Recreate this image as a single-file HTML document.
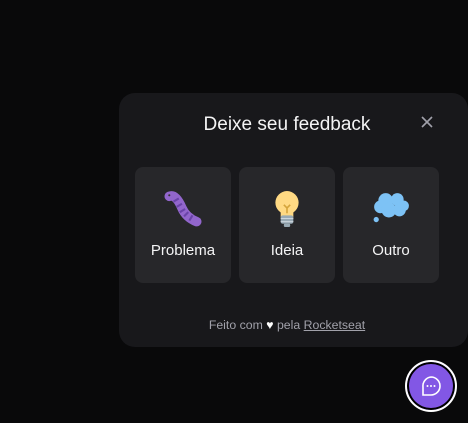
<!DOCTYPE html>
<html><head><meta charset="utf-8"><style>
*{margin:0;padding:0;box-sizing:border-box}
body{width:468px;height:423px;background:#09090a;position:relative;overflow:hidden;font-family:"Liberation Sans",sans-serif;color:#f4f4f5}
.panel{position:absolute;left:119px;top:93px;width:349px;height:254px;background:#18181b;border-radius:16px}
.title{position:absolute;left:0;width:336px;top:21px;text-align:center;font-size:19px;color:#f4f4f5}
.close{position:absolute;left:300px;top:21px}
.card{position:absolute;top:74px;width:96px;height:116px;background:#27272a;border-radius:8px;text-align:center}
.card span{position:absolute;left:0;right:0;top:75px;font-size:15px}
.card svg{position:absolute;left:29px;top:23px}
.foot{position:absolute;left:0;width:336px;top:225px;text-align:center;font-size:12.3px;color:#a1a1aa}
.foot u{text-decoration:underline}
.btn{position:absolute;left:405px;top:360px;width:52px;height:52px;border-radius:50%;background:#8257e5;border:2px solid #fff;box-shadow:0 0 0 2px #000 inset}
</style></head><body>
<div class="panel">
<div class="title">Deixe seu feedback</div>
<svg class="close" width="16" height="16" viewBox="0 0 16 16"><path d="M3 3L13 13M13 3L3 13" stroke="#a1a1aa" stroke-width="1.6"/></svg>
<div class="card" style="left:16px"><svg width="38" height="38" viewBox="0 0 36 36"><path d="M5 6C10 4 14 10 17 17S26 28 31 30" stroke="#9266cc" stroke-width="9" stroke-linecap="round" fill="none"/><path d="M9 11l5-3M12 16l5-3M15 21l5-3M19 25l4-4M24 29l3-5" stroke="#6a44a8" stroke-width="2"/><circle cx="5" cy="5" r="1" fill="#333"/></svg><span>Problema</span></div>
<div class="card" style="left:120px"><svg width="38" height="38" viewBox="0 0 36 36"><circle cx="18" cy="12" r="11" fill="#ffd983"/><rect x="12" y="20" width="12" height="6" fill="#ffd983"/><path d="M15 14l3 3 3-3M18 17v5" stroke="#d4a43c" stroke-width="1.5" fill="none"/><rect x="12" y="24" width="12" height="8" rx="2" fill="#99aab5"/><path d="M12 27h12M12 30h12" stroke="#ccd6dd" stroke-width="1"/><rect x="15" y="32" width="6" height="3" rx="1" fill="#99aab5"/></svg><span>Ideia</span></div>
<div class="card" style="left:224px"><svg width="38" height="38" viewBox="0 0 36 36"><g fill="#7dc2f5"><circle cx="13" cy="10" r="7"/><circle cx="24" cy="9" r="6"/><circle cx="30" cy="15" r="5"/><circle cx="8" cy="16" r="6"/><circle cx="16" cy="19" r="7"/><circle cx="26" cy="19" r="6"/><circle cx="4" cy="28" r="2.5"/></g></svg><span>Outro</span></div>
<div class="foot">Feito com <span style="color:#fff">♥</span> pela <u>Rocketseat</u></div>
</div>
<div class="btn"><svg style="position:absolute;left:13px;top:13px" width="22" height="22" viewBox="0 0 22 22"><path d="M11 2a9 9 0 1 1 0 18H3v-8a9 9 0 0 1 8-10z" stroke="#fff" stroke-width="1.6" fill="none"/><circle cx="7.5" cy="11" r="1" fill="#fff"/><circle cx="11" cy="11" r="1" fill="#fff"/><circle cx="14.5" cy="11" r="1" fill="#fff"/></svg></div>
</body></html>
